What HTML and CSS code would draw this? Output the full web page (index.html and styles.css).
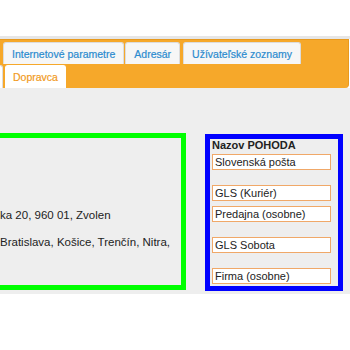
FILE: index.html
```html
<!DOCTYPE html>
<html lang="sk">
<head>
  <meta charset="UTF-8" />
  <title>Dopravca</title>
  <link rel="stylesheet" href="styles.css">
</head>
<body>
  <div class="top"></div>

  <div class="tabs">
    <div class="tab-row">
      <a class="tab">Internetové parametre</a>
      <a class="tab">Adresár</a>
      <a class="tab">Užívateľské zoznamy</a>
    </div>
    <div class="tab-row second">
      <a class="tab hidden-tab"></a>
      <a class="tab active">Dopravca</a>
    </div>
  </div>

  <div class="content">
    <div class="box green">
      <p class="line first">ka 20, 960 01, Zvolen</p>
      <p class="line">Bratislava, Košice, Trenčín, Nitra,</p>
    </div>

    <div class="box blue">
      <div class="head">Nazov POHODA</div>
      <input type="text" value="Slovenská pošta" />
      <input type="text" class="far" value="GLS (Kuriér)" />
      <input type="text" value="Predajna (osobne)" />
      <input type="text" class="far" value="GLS Sobota" />
      <input type="text" class="far" value="Firma (osobne)" />
    </div>
  </div>
</body>
</html>
```

FILE: styles.css
```css
body {
  margin: 0;
  background-color: #fff;
  font-family: 'Liberation Sans', Arial, sans-serif;
  font-size: 11px;
  color: #222;
  overflow: hidden;
}
.top {
  height: 36px;
  border-bottom: 3px solid #e6e6e6;
}
.tabs {
  background-color: #f6a82a;
  border-top: 1px solid #e89a1e;
  border-right: 1px solid #e89a1e;
  border-radius: 0 0 4px 0;
  width: 349px;
  height: 49px;
  padding-top: 2px;
  box-sizing: border-box;
  overflow: hidden;
}
.tab-row {
  display: flex;
  gap: 1px;
  padding-left: 3px;
}
.tab {
  display: block;
  background-color: #f6f6f6;
  border: 1px solid #dcdcdc;
  border-bottom: none;
  border-radius: 3px 3px 0 0;
  color: #2b8bcf;
  font-size: 10.5px;
  -webkit-text-stroke: 0.2px #2b8bcf;
  height: 22px;
  line-height: 22px;
  padding: 0 8px;
  box-sizing: border-box;
}
.tab-row .tab:nth-child(3) {
  margin-left: 2px;
}
.second {
  margin-top: 1px;
  padding-left: 0;
}
.hidden-tab {
  margin-left: -60px;
  background-color: #fff;
  width: 63px;
  height: 23px;
  margin-right: 1px;
}
.active {
  background-color: #fff;
  color: #f29a1c;
  -webkit-text-stroke: 0.2px #f29a1c;
  height: 23px;
  line-height: 23px;
  border-color: #fff;
  width: 61px;
  text-align: center;
  padding: 0;
}
.content {
  background-color: #eee;
  height: 206px;
  padding-top: 45px;
  box-sizing: border-box;
  display: flex;
  align-items: flex-start;
}
.box {
  border: 5px solid;
  box-sizing: border-box;
  height: 157px;
}
.green {
  border-color: #00ff00;
  width: 196px;
  margin-left: -10px;
  padding-left: 5px;
  padding-top: 70px;
  font-size: 11.5px;
  white-space: nowrap;
  overflow: hidden;
}
.line {
  margin: 0;
  line-height: 14px;
}
.line.first {
  margin-bottom: 13px;
}
.blue {
  border-color: #0000ff;
  width: 138px;
  margin-left: 19px;
  margin-top: 1px;
  padding: 0 7px 0 2px;
  display: flex;
  flex-direction: column;
}
.head {
  font-weight: bold;
  height: 15px;
  line-height: 12px;
}
input {
  font-family: 'Liberation Sans', Arial, sans-serif;
  font-size: 11px;
  color: #222;
  border: 1px solid #f0a868;
  background-color: #fff;
  height: 16px;
  padding: 0 2px;
  margin: 5px 0 0;
  width: 100%;
  box-sizing: border-box;
}
.head + input {
  margin-top: 0;
}
input.far {
  margin-top: 15px;
}
```
